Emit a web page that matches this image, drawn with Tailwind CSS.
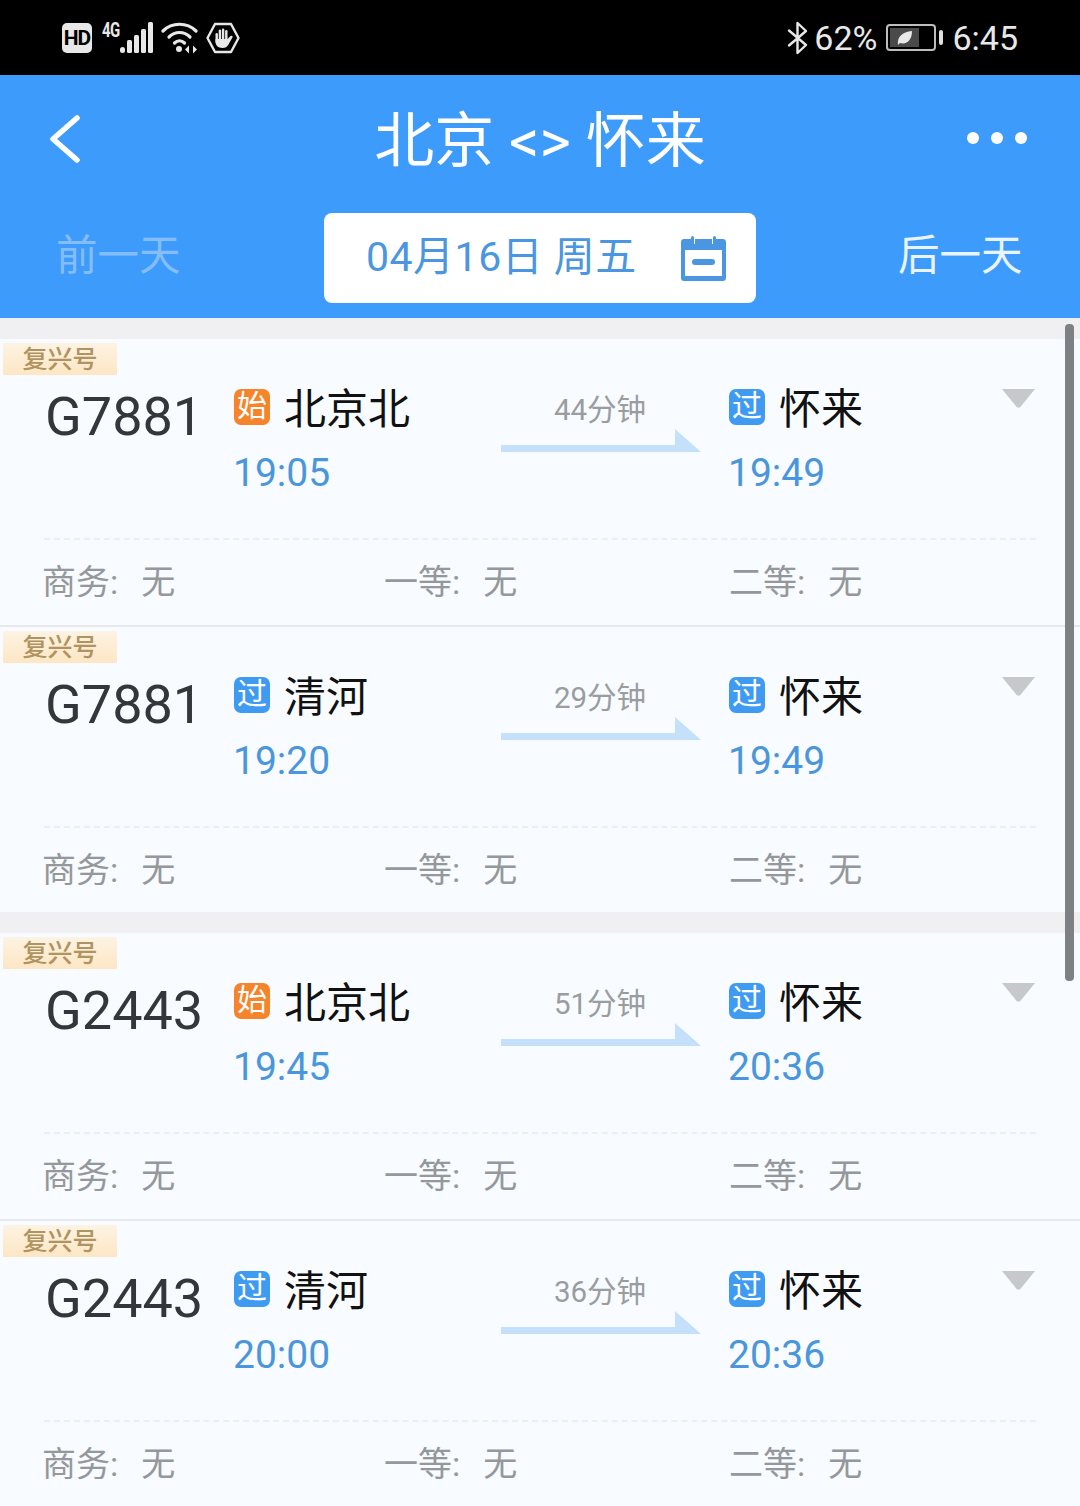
<!DOCTYPE html>
<html lang="zh">
<head>
    <meta charset="UTF-8">
    <title>北京 - 怀来</title>
    <script src="https://cdn.jsdelivr.net/npm/@tailwindcss/browser@4"></script>
</head>
<body class="bg-[#f8fbff] font-['Roboto','Noto_Sans_CJK_SC',sans-serif]">
<div class="relative w-[1080px] h-[1506px] overflow-hidden">

    <!-- status bar -->
    <div class="h-[75px] bg-black text-[#e8e8e8] flex items-center">
        <div class="ml-[62px] w-[30px] h-[30px] rounded-[5px] bg-[#e8e8e8] text-black text-[21px] font-bold leading-[30px] text-center font-['Roboto',sans-serif] tracking-[-1px]">HD</div>
        <span class="ml-[10px] self-start mt-[21px] text-[15px] font-bold leading-[15px] w-[18px] tracking-[-0.5px] scale-y-[1.3] origin-top">4G</span>
        <svg class="self-start mt-[22px]" width="33" height="31" viewBox="0 0 33 31" fill="#e8e8e8">
            <rect x="0" y="25" width="5" height="6" rx="2.500"/><rect x="7" y="18" width="5" height="13" rx="1.500"/><rect x="14" y="13" width="5" height="18" rx="1.500"/><rect x="21" y="7" width="5" height="24" rx="1.500"/><rect x="28" y="0" width="5" height="31" rx="1.500"/>
        </svg>
        <svg class="ml-[8px]" width="37" height="32" viewBox="0 0 37 32" fill="none" stroke="#e8e8e8" stroke-width="3.200" stroke-linecap="round">
            <path d="M2 9C11 0 26 0 35 9"/><path d="M8 15C14 9 23 9 29 15"/><path d="M13.500 21C16.500 18 20.500 18 23.500 21"/>
            <circle cx="18" cy="27" r="3" fill="#e8e8e8" stroke="none"/>
            <path d="M28 23.500L24 27.500L28 31.500Z M32 23.500L36 27.500L32 31.500Z" fill="#e8e8e8" stroke="none"/>
        </svg>
        <svg class="ml-[8px]" width="34" height="32" viewBox="0 0 34 32" fill="none">
            <path d="M9 2H25L32.500 16L25 30H9L1.500 16Z" stroke="#e8e8e8" stroke-width="2.400" stroke-linejoin="round"/>
            <g fill="#e8e8e8">
                <rect x="9.500" y="11" width="2.400" height="10" rx="1.200"/>
                <rect x="12.700" y="7.500" width="2.400" height="12" rx="1.200"/>
                <rect x="15.900" y="6.500" width="2.400" height="12" rx="1.200"/>
                <rect x="19.100" y="8" width="2.400" height="11" rx="1.200"/>
                <path d="M9.500 17H21.500L24.500 14C25.800 13 27.200 14.300 26.400 15.600L22.500 22.500C21 25 19.500 26 16.500 26C12 26 9.500 23 9.500 20Z"/>
            </g>
        </svg>

        <svg class="ml-auto" width="21" height="34" viewBox="0 0 21 34" fill="none" stroke="#e8e8e8" stroke-width="2.400" stroke-linejoin="round" stroke-linecap="round">
            <path d="M2 9.500L19 24L10.500 32V2L19 10L2 24.500"/>
        </svg>
        <span class="ml-[6px] text-[34px] leading-[40px]">62%</span>
        <div class="ml-[9px] w-[50px] h-[27px] rounded-[4px] border-2 border-[#bdbdbd] p-[2px] relative">
            <div class="w-[29px] h-full bg-[#4a4a4a] flex items-center justify-center">
                <svg width="16" height="16" viewBox="0 0 16 16" fill="#e8e8e8"><path d="M1 15C0 7 5 2 15 1C15 10 10 15 3 13Z"/></svg>
            </div>
        </div>
        <div class="ml-[3px] w-[4px] h-[15px] rounded-[2px] bg-[#e0e0e0]"></div>
        <span class="ml-[9px] mr-[62px] text-[34px] leading-[40px]">6:45</span>
    </div>

    <!-- header -->
    <div class="h-[243px] bg-[#3d9bfb] text-white">
        <div class="relative h-[138px] flex items-center justify-center">
            <svg class="absolute left-[48px] top-[39px]" width="34" height="50" viewBox="0 0 34 50" fill="none" stroke="#fff" stroke-width="5.500" stroke-linecap="round" stroke-linejoin="round">
                <path d="M29 4L5 25L29 46"/>
            </svg>
            <h1 class="text-[60px] leading-[70px] font-normal mt-[-5px]">北京 &lt;&gt; 怀来</h1>
            <div class="absolute left-[967px] top-[57px] flex gap-[12px]">
                <span class="w-[12px] h-[12px] rounded-full bg-white"></span>
                <span class="w-[12px] h-[12px] rounded-full bg-white"></span>
                <span class="w-[12px] h-[12px] rounded-full bg-white"></span>
            </div>
        </div>
        <div class="flex items-start">
            <span class="ml-[56px] w-[268px] text-[41.500px] leading-[86px] text-[#84bdf8]">前一天</span>
            <div class="w-[432px] h-[90px] rounded-[8px] bg-white flex items-center text-[#4a96e0]">
                <span class="ml-[42px] w-[315px] text-[41px] leading-[82px] h-[84px] tracking-[0.5px]">04月16日 周五</span>
                <svg width="45" height="46" viewBox="0 0 45 46" fill="#4a96e0">
                    <path fill-rule="evenodd" d="M3 4H10V9H14V4H31V9H35V4H42C43.700 4 45 5.300 45 7V43C45 44.700 43.700 46 42 46H3C1.300 46 0 44.700 0 43V7C0 5.300 1.300 4 3 4ZM4 15V41H41V15Z"/>
                    <rect x="10" y="1" width="3" height="9" rx="1.500"/><rect x="32" y="1" width="3" height="9" rx="1.500"/>
                    <rect x="11" y="24" width="23" height="6" rx="3"/>
                </svg>
            </div>
            <span class="ml-[142px] text-[41.500px] leading-[86px] text-[#eaf4ff]">后一天</span>
        </div>
    </div>

    <div class="h-[21px] bg-[#f0f0f3]"></div>

    <!-- card 1 -->
    <div class="h-[288px] border-b-2 border-[#e6e8eb] pt-[4px]">
        <div class="ml-[3px] w-[114px] h-[32px] bg-gradient-to-b from-[#fdf3e3] to-[#fde6c4] text-[#b0935f] text-[25px] font-medium leading-[34px] text-center">复兴号</div>
        <div class="flex items-start h-[163px] pt-[14px]">
            <div class="ml-[45px] mt-[1px] w-[189px] text-[54px] leading-[54px] text-[#33373b]">G7881</div>
            <div class="w-[267px]">
                <div class="flex items-center h-[36px]">
                    <span class="w-[36px] h-[36px] rounded-[7px] bg-[#f5842b] text-white text-[30px] leading-[34px] text-center">始</span>
                    <span class="ml-[14px] mt-[6px] text-[42px] leading-[36px] text-[#111]">北京北</span>
                </div>
                <div class="mt-[26px] -ml-[1px] text-[39px] leading-[44px] text-[#4a96dc]">19:05</div>
            </div>
            <div class="w-[200px]">
                <div class="h-[36px] -ml-[2px] text-center text-[#9a9da0] text-[29.500px] leading-[42px]">44分钟</div>
                <svg class="mt-[4px]" width="200" height="23" viewBox="0 0 200 23" fill="#c5e0fb"><path d="M0 16H174V0L200 23H0Z"/></svg>
            </div>
            <div class="ml-[28px]">
                <div class="flex items-center h-[36px]">
                    <span class="w-[36px] h-[36px] rounded-[7px] bg-[#3f9bf2] text-white text-[30px] leading-[34px] text-center">过</span>
                    <span class="ml-[14px] mt-[6px] text-[42px] leading-[36px] text-[#111]">怀来</span>
                </div>
                <div class="mt-[26px] -ml-[1px] text-[39px] leading-[44px] text-[#4a96dc]">19:49</div>
            </div>
            <svg class="ml-auto mr-[45px]" width="33" height="19" viewBox="0 0 33 19" fill="#c6c8ca"><path d="M0 0H33L18 18.500H15Z"/></svg>
        </div>
        <div class="mx-[44px] border-t-2 border-dashed border-[#eceef0]"></div>
        <div class="flex items-center h-[84px] text-[34px] text-[#95989b] leading-[42px]">
            <span class="ml-[42px] w-[342px]">商务:<span class="ml-[23px]">无</span></span>
            <span class="w-[345px]">一等:<span class="ml-[23px]">无</span></span>
            <span>二等:<span class="ml-[23px]">无</span></span>
        </div>
    </div>

    <!-- card 2 -->
    <div class="h-[285px] pt-[4px]">
        <div class="ml-[3px] w-[114px] h-[32px] bg-gradient-to-b from-[#fdf3e3] to-[#fde6c4] text-[#b0935f] text-[25px] font-medium leading-[34px] text-center">复兴号</div>
        <div class="flex items-start h-[163px] pt-[14px]">
            <div class="ml-[45px] mt-[1px] w-[189px] text-[54px] leading-[54px] text-[#33373b]">G7881</div>
            <div class="w-[267px]">
                <div class="flex items-center h-[36px]">
                    <span class="w-[36px] h-[36px] rounded-[7px] bg-[#3f9bf2] text-white text-[30px] leading-[34px] text-center">过</span>
                    <span class="ml-[14px] mt-[6px] text-[42px] leading-[36px] text-[#111]">清河</span>
                </div>
                <div class="mt-[26px] -ml-[1px] text-[39px] leading-[44px] text-[#4a96dc]">19:20</div>
            </div>
            <div class="w-[200px]">
                <div class="h-[36px] -ml-[2px] text-center text-[#9a9da0] text-[29.500px] leading-[42px]">29分钟</div>
                <svg class="mt-[4px]" width="200" height="23" viewBox="0 0 200 23" fill="#c5e0fb"><path d="M0 16H174V0L200 23H0Z"/></svg>
            </div>
            <div class="ml-[28px]">
                <div class="flex items-center h-[36px]">
                    <span class="w-[36px] h-[36px] rounded-[7px] bg-[#3f9bf2] text-white text-[30px] leading-[34px] text-center">过</span>
                    <span class="ml-[14px] mt-[6px] text-[42px] leading-[36px] text-[#111]">怀来</span>
                </div>
                <div class="mt-[26px] -ml-[1px] text-[39px] leading-[44px] text-[#4a96dc]">19:49</div>
            </div>
            <svg class="ml-auto mr-[45px]" width="33" height="19" viewBox="0 0 33 19" fill="#c6c8ca"><path d="M0 0H33L18 18.500H15Z"/></svg>
        </div>
        <div class="mx-[44px] border-t-2 border-dashed border-[#eceef0]"></div>
        <div class="flex items-center h-[84px] text-[34px] text-[#95989b] leading-[42px]">
            <span class="ml-[42px] w-[342px]">商务:<span class="ml-[23px]">无</span></span>
            <span class="w-[345px]">一等:<span class="ml-[23px]">无</span></span>
            <span>二等:<span class="ml-[23px]">无</span></span>
        </div>
    </div>

    <div class="h-[21px] bg-[#f0f0f3]"></div>

    <!-- card 3 -->
    <div class="h-[288px] border-b-2 border-[#e6e8eb] pt-[4px]">
        <div class="ml-[3px] w-[114px] h-[32px] bg-gradient-to-b from-[#fdf3e3] to-[#fde6c4] text-[#b0935f] text-[25px] font-medium leading-[34px] text-center">复兴号</div>
        <div class="flex items-start h-[163px] pt-[14px]">
            <div class="ml-[45px] mt-[1px] w-[189px] text-[54px] leading-[54px] text-[#33373b]">G2443</div>
            <div class="w-[267px]">
                <div class="flex items-center h-[36px]">
                    <span class="w-[36px] h-[36px] rounded-[7px] bg-[#f5842b] text-white text-[30px] leading-[34px] text-center">始</span>
                    <span class="ml-[14px] mt-[6px] text-[42px] leading-[36px] text-[#111]">北京北</span>
                </div>
                <div class="mt-[26px] -ml-[1px] text-[39px] leading-[44px] text-[#4a96dc]">19:45</div>
            </div>
            <div class="w-[200px]">
                <div class="h-[36px] -ml-[2px] text-center text-[#9a9da0] text-[29.500px] leading-[42px]">51分钟</div>
                <svg class="mt-[4px]" width="200" height="23" viewBox="0 0 200 23" fill="#c5e0fb"><path d="M0 16H174V0L200 23H0Z"/></svg>
            </div>
            <div class="ml-[28px]">
                <div class="flex items-center h-[36px]">
                    <span class="w-[36px] h-[36px] rounded-[7px] bg-[#3f9bf2] text-white text-[30px] leading-[34px] text-center">过</span>
                    <span class="ml-[14px] mt-[6px] text-[42px] leading-[36px] text-[#111]">怀来</span>
                </div>
                <div class="mt-[26px] -ml-[1px] text-[39px] leading-[44px] text-[#4a96dc]">20:36</div>
            </div>
            <svg class="ml-auto mr-[45px]" width="33" height="19" viewBox="0 0 33 19" fill="#c6c8ca"><path d="M0 0H33L18 18.500H15Z"/></svg>
        </div>
        <div class="mx-[44px] border-t-2 border-dashed border-[#eceef0]"></div>
        <div class="flex items-center h-[84px] text-[34px] text-[#95989b] leading-[42px]">
            <span class="ml-[42px] w-[342px]">商务:<span class="ml-[23px]">无</span></span>
            <span class="w-[345px]">一等:<span class="ml-[23px]">无</span></span>
            <span>二等:<span class="ml-[23px]">无</span></span>
        </div>
    </div>

    <!-- card 4 -->
    <div class="h-[285px] pt-[4px]">
        <div class="ml-[3px] w-[114px] h-[32px] bg-gradient-to-b from-[#fdf3e3] to-[#fde6c4] text-[#b0935f] text-[25px] font-medium leading-[34px] text-center">复兴号</div>
        <div class="flex items-start h-[163px] pt-[14px]">
            <div class="ml-[45px] mt-[1px] w-[189px] text-[54px] leading-[54px] text-[#33373b]">G2443</div>
            <div class="w-[267px]">
                <div class="flex items-center h-[36px]">
                    <span class="w-[36px] h-[36px] rounded-[7px] bg-[#3f9bf2] text-white text-[30px] leading-[34px] text-center">过</span>
                    <span class="ml-[14px] mt-[6px] text-[42px] leading-[36px] text-[#111]">清河</span>
                </div>
                <div class="mt-[26px] -ml-[1px] text-[39px] leading-[44px] text-[#4a96dc]">20:00</div>
            </div>
            <div class="w-[200px]">
                <div class="h-[36px] -ml-[2px] text-center text-[#9a9da0] text-[29.500px] leading-[42px]">36分钟</div>
                <svg class="mt-[4px]" width="200" height="23" viewBox="0 0 200 23" fill="#c5e0fb"><path d="M0 16H174V0L200 23H0Z"/></svg>
            </div>
            <div class="ml-[28px]">
                <div class="flex items-center h-[36px]">
                    <span class="w-[36px] h-[36px] rounded-[7px] bg-[#3f9bf2] text-white text-[30px] leading-[34px] text-center">过</span>
                    <span class="ml-[14px] mt-[6px] text-[42px] leading-[36px] text-[#111]">怀来</span>
                </div>
                <div class="mt-[26px] -ml-[1px] text-[39px] leading-[44px] text-[#4a96dc]">20:36</div>
            </div>
            <svg class="ml-auto mr-[45px]" width="33" height="19" viewBox="0 0 33 19" fill="#c6c8ca"><path d="M0 0H33L18 18.500H15Z"/></svg>
        </div>
        <div class="mx-[44px] border-t-2 border-dashed border-[#eceef0]"></div>
        <div class="flex items-center h-[84px] text-[34px] text-[#95989b] leading-[42px]">
            <span class="ml-[42px] w-[342px]">商务:<span class="ml-[23px]">无</span></span>
            <span class="w-[345px]">一等:<span class="ml-[23px]">无</span></span>
            <span>二等:<span class="ml-[23px]">无</span></span>
        </div>
    </div>

    <!-- scrollbar -->
    <div class="absolute left-[1065px] top-[324px] w-[9px] h-[657px] rounded-[4px] bg-[#7e8184]"></div>
</div>
</body>
</html>
